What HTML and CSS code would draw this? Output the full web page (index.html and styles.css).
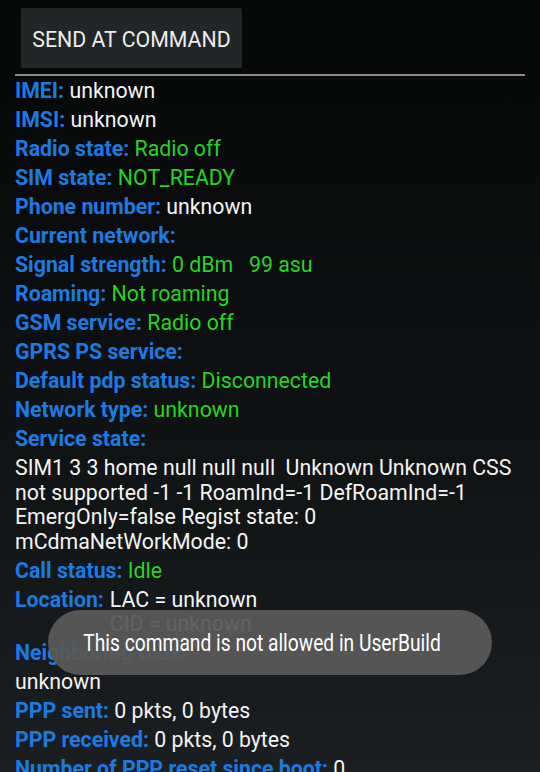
FILE: index.html
```html
<!DOCTYPE html>
<html>
<head>
<meta charset="utf-8">
<link rel="stylesheet" href="styles.css">
</head>
<body>
<div class="screen">
  <div class="actions">
    <button class="btn">SEND AT COMMAND</button>
  </div>
  <div class="divider"></div>
  <div class="info">
    <p class="row"><span class="lbl">IMEI:</span> <span class="val">unknown</span></p>
    <p class="row"><span class="lbl">IMSI:</span> <span class="val">unknown</span></p>
    <p class="row"><span class="lbl">Radio state:</span> <span class="ok">Radio off</span></p>
    <p class="row"><span class="lbl">SIM state:</span> <span class="ok">NOT_READY</span></p>
    <p class="row"><span class="lbl">Phone number:</span> <span class="val">unknown</span></p>
    <p class="row"><span class="lbl">Current network:</span></p>
    <p class="row"><span class="lbl">Signal strength:</span> <span class="ok">0 dBm &nbsp; 99 asu</span></p>
    <p class="row"><span class="lbl">Roaming:</span> <span class="ok">Not roaming</span></p>
    <p class="row"><span class="lbl">GSM service:</span> <span class="ok">Radio off</span></p>
    <p class="row"><span class="lbl">GPRS PS service:</span></p>
    <p class="row"><span class="lbl">Default pdp status:</span> <span class="ok">Disconnected</span></p>
    <p class="row"><span class="lbl">Network type:</span> <span class="ok">unknown</span></p>
    <p class="row"><span class="lbl">Service state:</span></p>
    <p class="row val">SIM1 3 3 home null null null&nbsp; Unknown Unknown CSS not supported -1 -1 RoamInd=-1 DefRoamInd=-1 EmergOnly=false Regist state: 0 mCdmaNetWorkMode: 0</p>
    <p class="row"><span class="lbl">Call status:</span> <span class="ok">Idle</span></p>
    <div class="row loc">
      <span class="lbl">Location:</span>
      <span class="loc-lines val"><span>LAC = unknown</span><span>CID = unknown</span></span>
    </div>
    <p class="row"><span class="lbl">Neighboring Cids:</span></p>
    <p class="row val">unknown</p>
    <p class="row"><span class="lbl">PPP sent:</span> <span class="val">0 pkts, 0 bytes</span></p>
    <p class="row"><span class="lbl">PPP received:</span> <span class="val">0 pkts, 0 bytes</span></p>
    <p class="row"><span class="lbl">Number of PPP reset since boot:</span> <span class="val">0</span></p>
  </div>
  <div class="toast"><span class="toast-text">This command is not allowed in UserBuild</span></div>
</div>
</body>
</html>
```
FILE: styles.css
```css
html, body {
  margin: 0;
  padding: 0;
  height: 100%;
  overflow: hidden;
}
body {
  background: linear-gradient(180deg, #060707 0%, #0c0e0f 40%, #1b1f21 100%);
  font-family: Roboto, "Noto Sans", sans-serif;
  color: #f2f2f2;
}
.screen {
  position: relative;
  height: 772px;
  overflow: hidden;
}
.actions {
  padding: 8px 0 0 21px;
}
.btn {
  width: 221px;
  height: 60px;
  background: #222627;
  border: none;
  border-radius: 2px;
  color: #ededed;
  font-family: Roboto, sans-serif;
  font-size: 21.3px;
  padding: 2px 0 0 0;
  margin: 0;
  display: block;
}
.divider {
  margin: 6px 15px 0 15px;
  height: 2px;
  background: #8a8a8a;
}
.info {
  padding: 1px 15px 0 15px;
}
.row {
  margin: 0;
  padding: 2.25px 0;
  font-size: 21.3px;
  line-height: 24.5px;
}
.lbl {
  color: #1c7be3;
  font-weight: 700;
}
.val {
  color: #f4f4f4;
}
.ok {
  color: #24d524;
}
.loc {
  display: flex;
  gap: 6px;
}
.loc-lines {
  display: flex;
  flex-direction: column;
}
.toast {
  position: absolute;
  left: 48px;
  top: 610px;
  width: 444px;
  height: 65px;
  border-radius: 33px;
  background: rgba(88, 89, 88, 0.94);
  display: flex;
  align-items: center;
  justify-content: center;
}
.toast-text {
  color: #ffffff;
  font-size: 23px;
  display: inline-block;
  transform: scaleX(0.835);
  white-space: nowrap;
  margin-left: -15px;
  padding-top: 2px;
}
```
